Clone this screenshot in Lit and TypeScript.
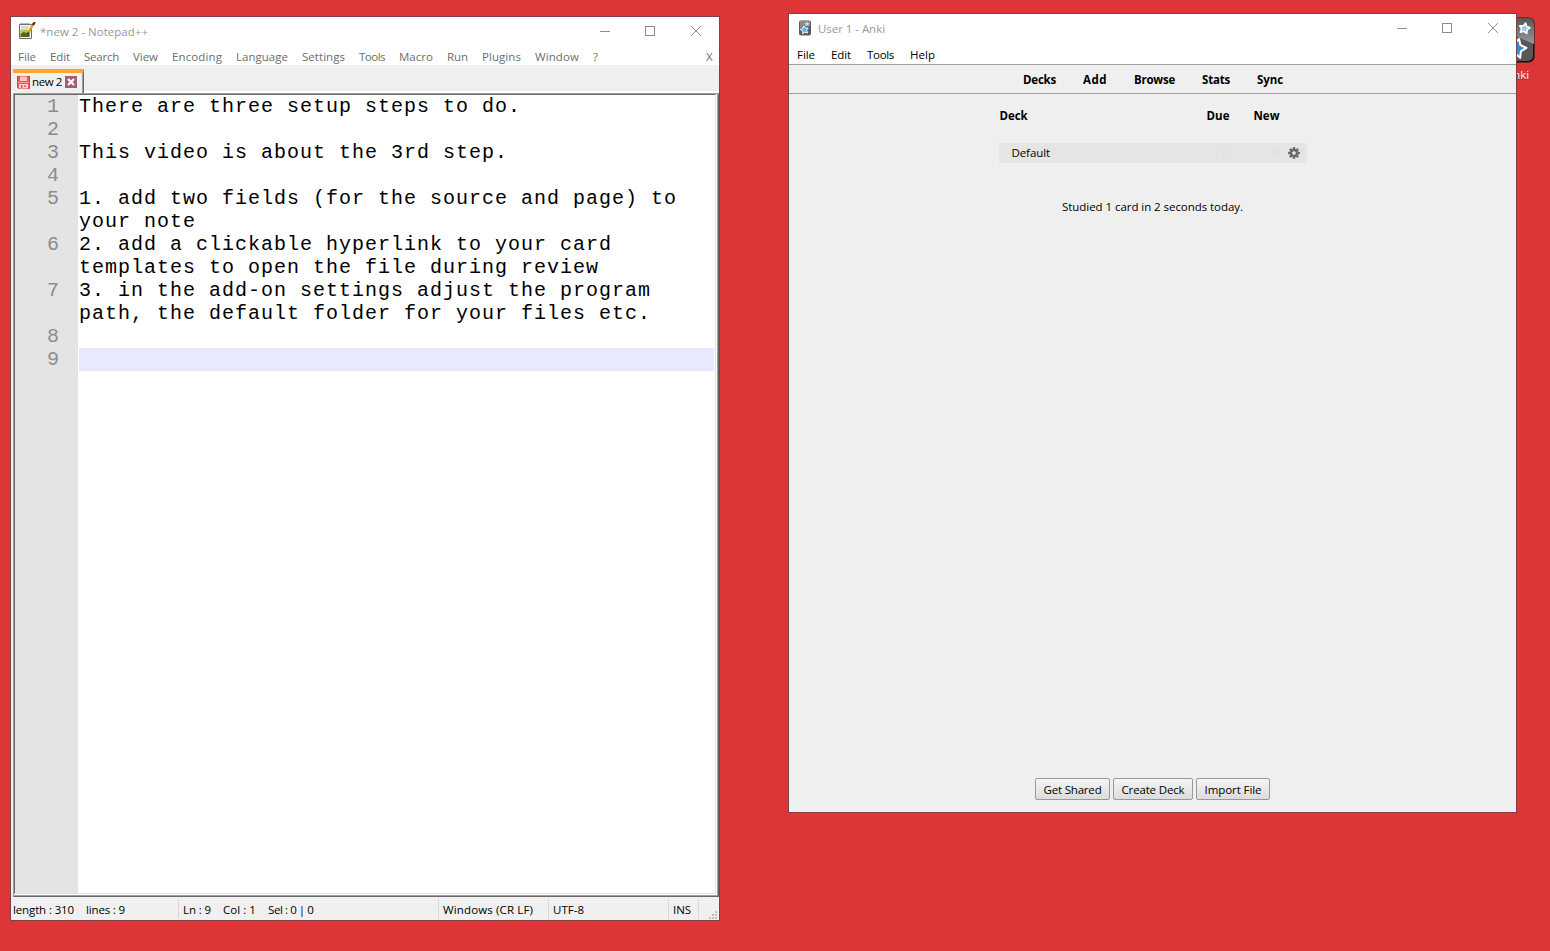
import { LitElement, html, css, svg } from "lit";
import { customElement, property } from "lit/decorators.js";

type Label = [text: string, width: number];

/* A one-line label whose tracking is adjusted so that it fills a given width. */
@customElement("ui-label")
class UiLabel extends LitElement {
  @property() text = "";
  @property({ type: Number }) width = 0;
  static styles = css`
    :host { display: inline-block; white-space: pre; flex: none; }
    .run { display: inline-block; white-space: pre; }
  `;
  render() {
    return html`<span class="run">${this.text}</span>`;
  }
  updated() {
    const run = this.renderRoot.querySelector<HTMLElement>(".run")!;
    run.style.letterSpacing = "0px";
    const natural = run.getBoundingClientRect().width;
    const n = this.text.length;
    run.style.letterSpacing = (this.width - natural) / Math.max(1, n) + "px";
    this.style.width = this.width + "px";
  }
}

const label = ([text, width]: Label) => html`<ui-label .text=${text} .width=${width}></ui-label>`;

const NPP_MENU: Label[] = [
  ["File", 18], ["Edit", 20], ["Search", 35], ["View", 25], ["Encoding", 50], ["Language", 52],
  ["Settings", 43], ["Tools", 26], ["Macro", 34], ["Run", 21], ["Plugins", 39], ["Window", 44], ["?", 6],
];

const LINES: string[][] = [
  ["There are three setup steps to do."],
  [""],
  ["This video is about the 3rd step."],
  [""],
  ["1. add two fields (for the source and page) to", "your note"],
  ["2. add a clickable hyperlink to your card", "templates to open the file during review"],
  ["3. in the add-on settings adjust the program", "path, the default folder for your files etc."],
  [""],
  [""],
];

const controls = svg`
  <path d="M0 13.5h10" /><rect x="45.5" y="8.5" width="9" height="9" />
  <path d="M91 8l10 10M101 8l-10 10" />`;

const star = (cx: number, cy: number, r: number, rot = 0) => {
  const pts: string[] = [];
  for (let i = 0; i < 10; i++) {
    const a = (Math.PI / 5) * i - Math.PI / 2 + rot;
    const q = i % 2 ? r * 0.52 : r;
    pts.push(`${(cx + q * Math.cos(a)).toFixed(2)},${(cy + q * Math.sin(a)).toFixed(2)}`);
  }
  return pts.join(" ");
};

@customElement("notepad-window")
class NotepadWindow extends LitElement {
  static styles = css`
    :host {
      display: flex; flex-direction: column; box-sizing: border-box; width: 710px; height: 905px;
      border: 1px solid #7d4245; background: #fff; font: 11.5px/16px "Open Sans", sans-serif; color: #000;
    }
    .title { display: flex; height: 29px; padding: 0 17px 0 7px; align-items: center; color: #999; }
    .title .icon { width: 18px; height: 18px; margin: -2px 4px 0 0; }
    .controls { width: 102px; height: 28px; margin-left: auto; fill: none; stroke: #8e8e8e; }
    .menu { display: flex; height: 19px; padding: 2px 6px 0 7px; gap: 14px; align-items: center; box-sizing: border-box; color: #6d6d6d; }
    .menu .close { margin-left: auto; }
    .tabs { display: flex; height: 26px; background: #efefef; padding: 3px 0 0 2px; box-sizing: border-box; }
    .tab {
      display: flex; align-items: center; box-sizing: border-box; width: 71px; height: 24px;
      border-top: 4px solid #faa634; border-right: 1px solid #696969; padding: 0 0 0 4px; background: #f0f0f0;
      box-shadow: inset -1px 0 #a0a0a0; margin-top: 1px;
    }
    .tab ui-label { margin-top: -2px; }
    .tab .disk { width: 13px; height: 13px; margin: -1px 2px 0 0; }
    .tab .x { width: 12px; height: 12px; margin: -2px 0 0 3px; }
    .frame {
      display: flex; flex: 1; margin: 2px 0 0 2px; border: 1px solid #a0a0a0; border-right-color: #696969;
      border-bottom-color: #696969; min-height: 0; box-shadow: inset -1px -1px #a0a0a0, -2px 0 #f0f0f0;
    }
    .inner {
      display: flex; flex: 1; border: 1px solid #696969; border-right-color: #e3e3e3; border-bottom-color: #e3e3e3;
      margin: 0 2px 2px 0;
    }
    .code { flex: 1; display: flex; flex-direction: column; background: linear-gradient(90deg, #e4e4e4 63px, #fff 63px); }
    .line { display: grid; grid-template-columns: 45px 1fr; column-gap: 19px; font: 20px/23px "Liberation Mono", monospace; letter-spacing: 0.998px; }
    .num { text-align: right; color: #8c8c8c; }
    .row { height: 23px; white-space: pre; }
    .current .row { background: #e8e8ff; margin-right: 1px; }
    .status { display: flex; height: 23px; background: #f0f0f0; align-items: center; padding: 0; box-sizing: border-box; }
    .cell { display: flex; align-items: center; height: 20px; box-sizing: border-box; border-right: 1px solid #d7d7d7; padding-left: 2px; padding-top: 3px; }
    .c1 { width: 168px; gap: 12px; }
    .c2 { width: 260px; gap: 12px; padding-left: 4px; }
    .c3 { width: 110px; padding-left: 4px; }
    .c4 { width: 120px; padding-left: 4px; }
    .c5 { width: 30px; padding-left: 4px; }
    .grip { width: 8px; height: 8px; margin: 12px 2px 0 auto; fill: #bfbfbf; }
  `;
  render() {
    return html`
      <div class="title">
        <svg class="icon" viewBox="0 0 18 18">
          <path d="M1.500 2.500h12v14h-12z" fill="#f7f7f4" stroke="#6a6a66" />
          <path d="M3 1v2M5 1v2M7 1v2M9 1v2M11 1v2" stroke="#777" />
          <path d="M3 5h8M3 7h7" stroke="#bbb" />
          <path d="M2.500 8h9v7h-9z" fill="#b9c44b" />
          <path d="M2.500 12l3-2 3 1 3-1v5h-9z" fill="#4d6b22" />
          <path d="M15.500 1.500l-5 9" stroke="#e2a11b" stroke-width="2.400" />
          <path d="M16.800 0l-2 3.200" stroke="#7b1b10" stroke-width="2.200" />
          <path d="M10.500 10l-1 2.500" stroke="#333" />
        </svg>
        ${label(["*new 2 - Notepad++", 108])}
        <svg class="controls">${controls}</svg>
      </div>
      <div class="menu">${NPP_MENU.map(label)}<span class="close">${label(["X", 7])}</span></div>
      <div class="tabs">
        <div class="tab">
          <svg class="disk" viewBox="0 0 13 13">
            <path d="M0.500 0.500h12v12h-11l-1-1z" fill="#f25555" stroke="#e03c3c" />
            <path d="M3 0.500h7v4.500h-7z" fill="#ffc4c4" /><path d="M1 6.500h11" stroke="#ff9b9b" />
            <path d="M2 8h9v4.500h-9z" fill="#fbd0d0" /><path d="M4 9h1.500v3h-1.500zM7 9.500h2v1.500h-2z" fill="#e05050" />
          </svg>
          ${label(["new 2", 30])}
          <svg class="x" viewBox="0 0 12 12">
            <path d="M0 0h12v12h-12z" fill="#9c6078" /><path d="M3 3l6 6M9 3l-6 6" stroke="#fff" stroke-width="2.200" />
          </svg>
        </div>
      </div>
      <div class="frame"><div class="inner"><div class="code">
        ${LINES.map((rows, i) => html`
          <div class="line ${i === 8 ? "current" : ""}">
            <div class="num">${i + 1}</div>
            <div>${rows.map((r) => html`<div class="row">${r}</div>`)}</div>
          </div>`)}
      </div></div></div>
      <div class="status">
        <div class="cell c1">${label(["length : 310", 61])}${label(["lines : 9", 39])}</div>
        <div class="cell c2">${label(["Ln : 9", 28])}${label(["Col : 1", 33])}${label(["Sel : 0 | 0", 45.5])}</div>
        <div class="cell c3">${label(["Windows (CR LF)", 90])}</div>
        <div class="cell c4">${label(["UTF-8", 31])}</div>
        <div class="cell c5">${label(["INS", 18])}</div>
        <svg class="grip" viewBox="0 0 8 8">
          <path d="M6 0h2v2h-2zM3 3h2v2h-2zM6 3h2v2h-2zM0 6h2v2h-2zM3 6h2v2h-2zM6 6h2v2h-2z" />
        </svg>
      </div>`;
  }
}

const gearTeeth = [0, 45, 90, 135, 180, 225, 270, 315];

@customElement("anki-window")
class AnkiWindow extends LitElement {
  static styles = css`
    :host {
      display: flex; flex-direction: column; box-sizing: border-box; width: 729px; height: 800px;
      border: 1px solid #7d4245; background: #efefef; font: 11.5px/16px "Open Sans", sans-serif; color: #000;
    }
    .title { display: flex; height: 29px; padding: 0 17px 0 9px; align-items: center; color: #999; background: #fff; }
    .title .icon { width: 14px; height: 16px; margin: -1px 6px 0 0; }
    .controls { width: 102px; height: 28px; margin-left: auto; fill: none; stroke: #8e8e8e; }
    .menu { display: flex; height: 19px; padding: 2px 8px 0; gap: 16px; align-items: center; background: #fff; }
    .bar {
      display: flex; height: 26px; padding: 2px 0 0 1px; border-top: 1px solid #a0a0a0; border-bottom: 1px solid #a0a0a0;
      align-items: center; justify-content: center; gap: 27px; font-weight: 700;
    }
    .decks { width: 308px; margin: 0 auto; }
    .head, .deck { display: grid; grid-template-columns: 1fr auto auto 27px; align-items: center; }
    .head { font-weight: 700; height: 20px; margin-top: 12px; padding-left: 1px; }
    .head .new { margin-left: 24px; }
    .deck { height: 20px; margin-top: 17px; background: #e5e5e5; padding-left: 13px; }
    .zero { color: #dedede; }
    .deck .zero.new { margin-left: 44px; }
    .gear { width: 12px; height: 12px; margin: -1px 0 0 8px; }
    .studied { display: flex; justify-content: center; margin-top: 36px; }
    .actions { display: flex; justify-content: center; gap: 3px; margin: auto 1px 12px 0; }
    button {
      font: inherit; height: 22px; padding: 2px 7px 0 8px; border: 1px solid #999; border-radius: 2px; color: #000;
      background: linear-gradient(#f5f5f5, #dcdcdc); display: flex; align-items: center; box-sizing: border-box;
    }
  `;
  render() {
    return html`
      <div class="title">
        <svg class="icon" viewBox="0 0 14 16">
          <rect x="1" y="0.500" width="12" height="15" rx="2" fill="#5b5b5b" />
          <path d="M2 1h10v5q-5 0-10 3z" fill="#8b8b8b" />
          <polygon points=${star(9, 4, 2.6)} fill="#c5e4fa" />
          <polygon points=${star(6.5, 10, 4.2, -0.2)} fill="#58b4f0" stroke="#e9f5ff" stroke-width="1" />
        </svg>
        ${label(["User 1 - Anki", 67])}
        <svg class="controls">${controls}</svg>
      </div>
      <div class="menu">${([["File", 18], ["Edit", 20], ["Tools", 27], ["Help", 25]] as Label[]).map(label)}</div>
      <div class="bar">${([["Decks", 33], ["Add", 24], ["Browse", 41], ["Stats", 28], ["Sync", 26]] as Label[]).map(label)}</div>
      <div class="decks">
        <div class="head">${label(["Deck", 28])}${label(["Due", 23])}<span class="new">${label(["New", 26])}</span></div>
        <div class="deck">
          ${label(["Default", 38.5])}<span class="zero">0</span><span class="zero new">0</span>
          <svg class="gear" viewBox="-6 -6 12 12">
            ${gearTeeth.map((a) => svg`<rect x="-1.200" y="-5.900" width="2.400" height="4" fill="#6b6b6b" transform="rotate(${a})" />`)}
            <circle r="3.100" fill="none" stroke="#6b6b6b" stroke-width="2.200" />
          </svg>
        </div>
      </div>
      <div class="studied">${label(["Studied 1 card in 2 seconds today.", 181])}</div>
      <div class="actions">
        ${([["Get Shared", 58], ["Create Deck", 63], ["Import File", 57]] as Label[]).map((l) => html`<button>${label(l)}</button>`)}
      </div>`;
  }
}

@customElement("app-root")
class AppRoot extends LitElement {
  static styles = css`
    :host { display: block; position: relative; width: 1550px; height: 951px; overflow: hidden; background: #dc3639; }
    .npp { position: absolute; left: 10px; top: 16px; }
    .anki { position: absolute; left: 788px; top: 13px; }
    .shortcut { position: absolute; left: 1489px; top: 17px; width: 60px; display: flex; flex-direction: column; align-items: center; font: 11.5px/16px "Open Sans", sans-serif; color: #fff; }
    .shortcut svg { width: 46px; height: 46px; margin: 0 14px 4px 0; }
    .shortcut ui-label { margin-right: 3px; text-shadow: 0 1px 1px #0006; }
  `;
  render() {
    return html`
      <div class="shortcut">
        <svg viewBox="0 0 46 46">
          <defs><linearGradient id="g" x2="0" y2="1"><stop stop-color="#555" /><stop offset="1" stop-color="#999" /></linearGradient></defs>
          <rect x="0.500" y="0.500" width="45" height="45" rx="6" fill="#111" />
          <rect x="1" y="1" width="43" height="43" rx="5" fill="#585858" />
          <path d="M1 1h38q6 0 6 6v20q-10-4-18-8h-26z" fill="url(#g)" />
          <polygon points=${star(35.5, 11.5, 5.5, 0.2)} fill="#8cc9f2" stroke="#fff" stroke-width="1.600" stroke-linejoin="round" />
          <polygon points=${star(27.5, 31.5, 10, 0.25)} fill="#2b8fe0" stroke="#fff" stroke-width="2" stroke-linejoin="round" />
        </svg>
        ${label(["Anki", 23])}
      </div>
      <notepad-window class="npp"></notepad-window>
      <anki-window class="anki"></anki-window>`;
  }
}
